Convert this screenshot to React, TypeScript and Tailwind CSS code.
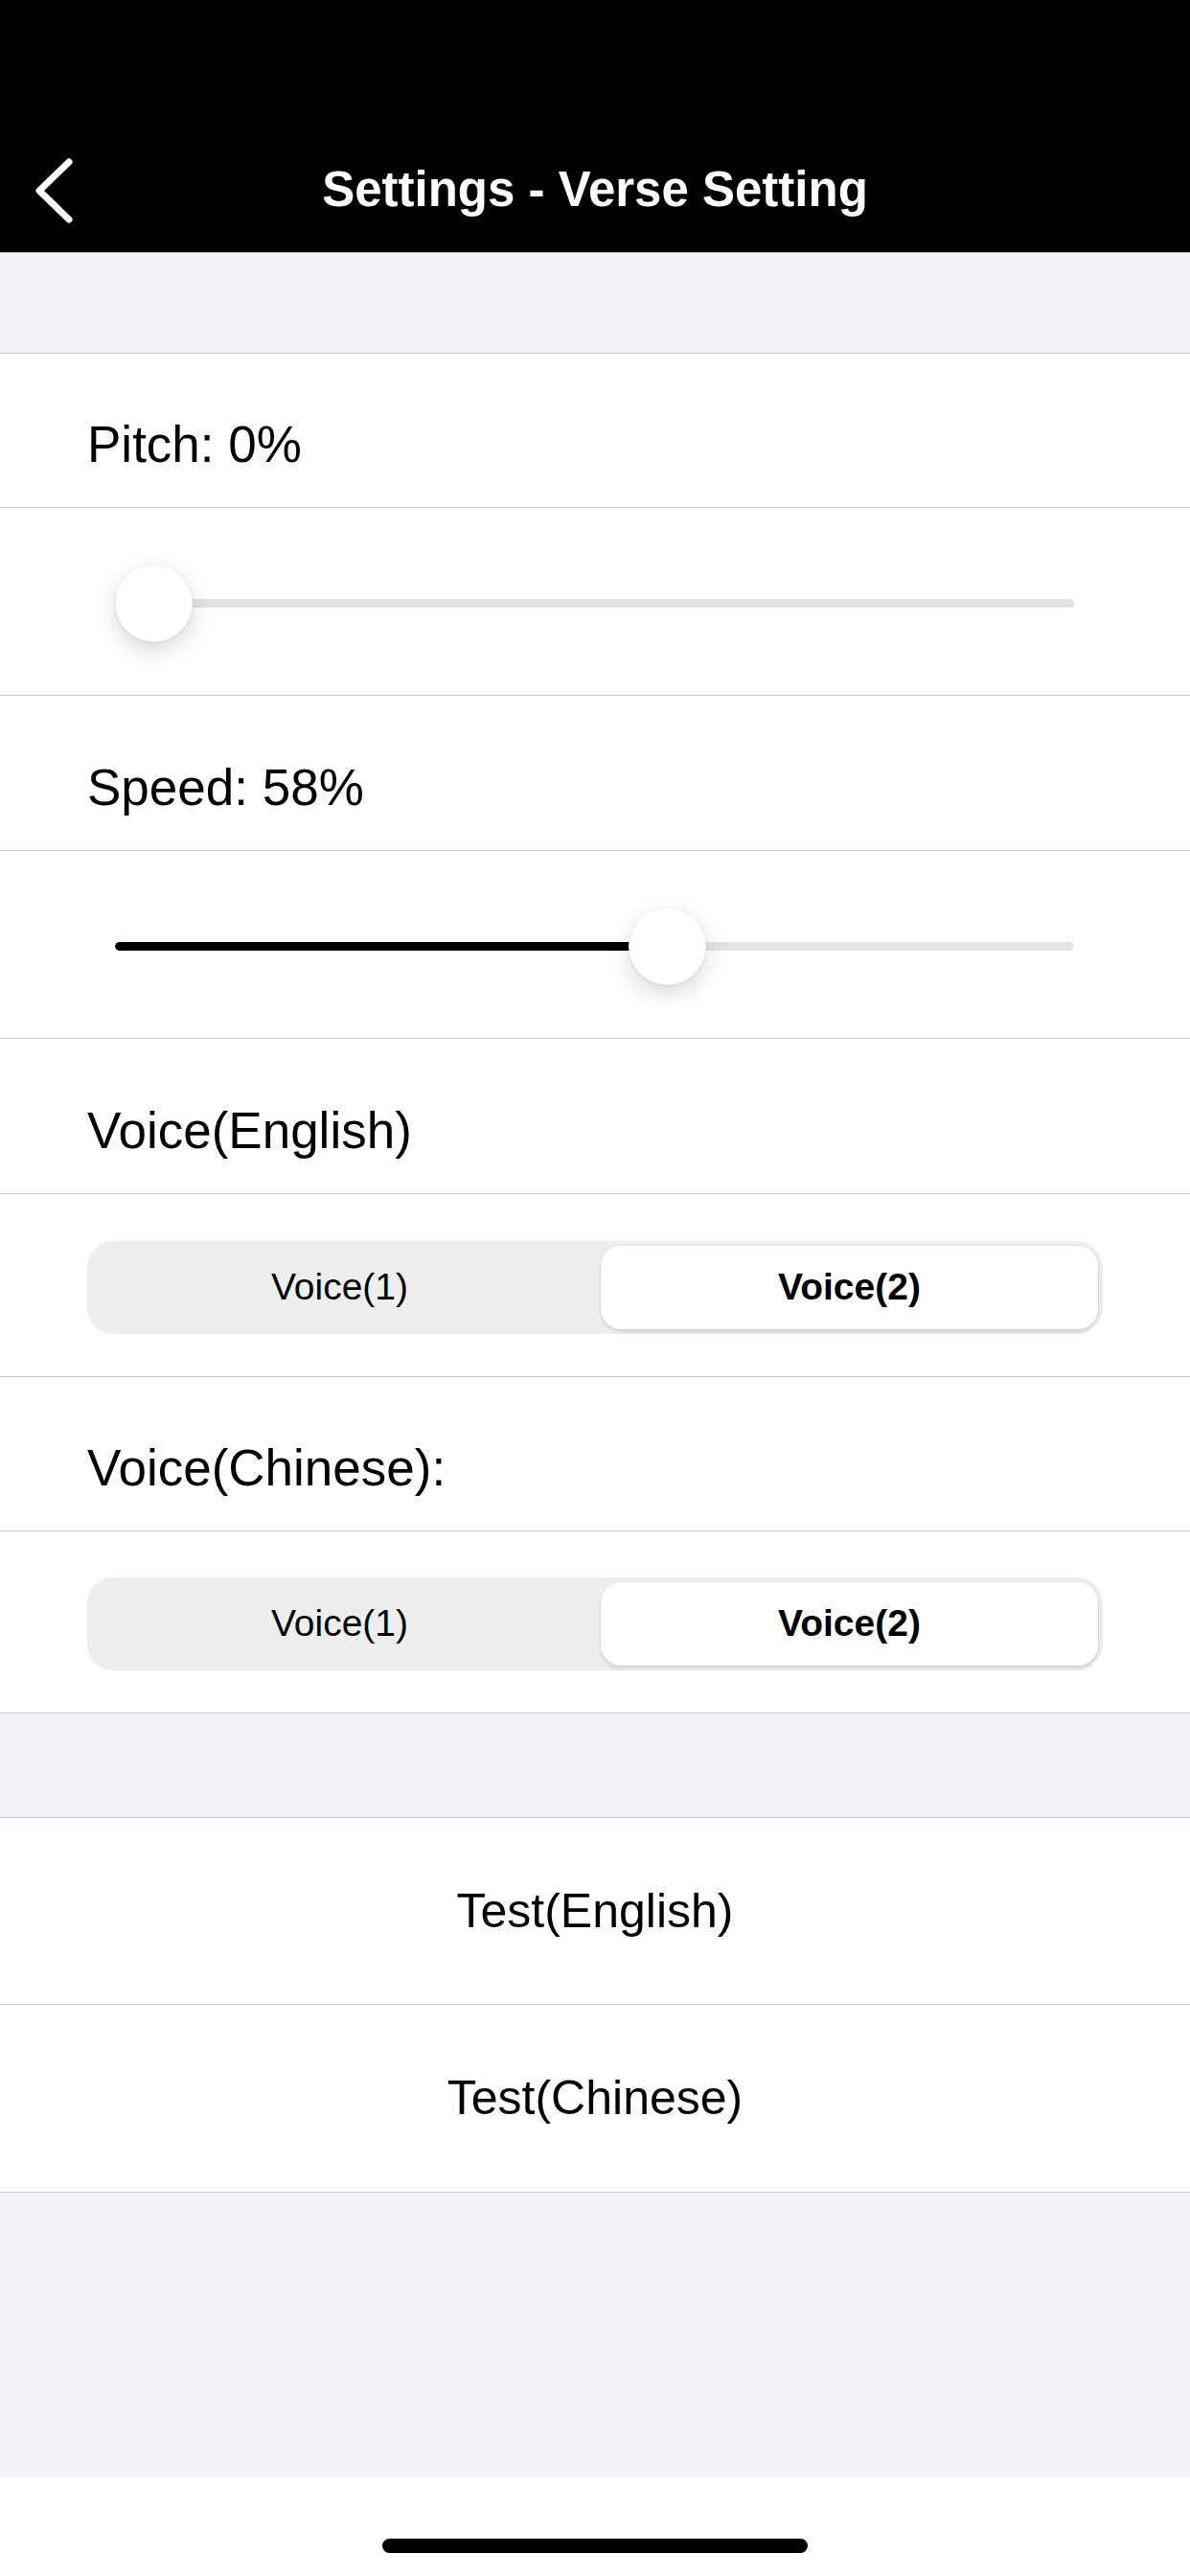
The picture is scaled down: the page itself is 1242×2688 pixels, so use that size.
import React from 'react'

const FONT = { fontFamily: '"Liberation Sans", Arial, sans-serif' }

function Slider({ value }: { value: number }) {
  // thumb is 81px, track runs 120 → 1121
  const thumb = 81
  const width = 1001
  const left = value * (width - thumb)
  return (
    <div className="relative mx-[120px] h-[81px] w-[1001px] flex items-center">
      <div className="h-[9px] w-full rounded-full bg-[#e3e3e6] overflow-hidden">
        <div className="h-full bg-black rounded-full" style={{ width: left + thumb / 2 }} />
      </div>
      <div
        className="absolute top-0 h-[81px] w-[81px] rounded-full bg-white border border-black/[0.04] shadow-[0_9px_24px_rgba(0,0,0,0.15),0_1px_3px_rgba(0,0,0,0.08)]"
        style={{ left }}
      />
    </div>
  )
}

function Segmented({ selected }: { selected: number }) {
  const items = ['Voice(1)', 'Voice(2)']
  return (
    <div className="mx-[91px] h-[97px] rounded-[27px] bg-[#eeeeef] p-[5px] grid grid-cols-[531fr_519fr]">
      {items.map((label, i) => (
        <div
          key={label}
          className={`flex items-center justify-center text-[39px] text-black ${
            selected === i
              ? 'bg-white rounded-[21px] font-bold shadow-[0_3px_4px_rgba(0,0,0,0.10),0_0_0_1px_rgba(0,0,0,0.04)]'
              : 'pr-[14px]'
          }`}
        >
          {label}
        </div>
      ))}
    </div>
  )
}

function LabelRow({ text, h }: { text: string; h: string }) {
  return (
    <div className={`${h} border-b border-[#c8c7cc] bg-white flex items-center pt-[30px] pl-[91px] text-[53px] text-black`}>
      {text}
    </div>
  )
}

export default function App() {
  return (
    <div className="w-[1242px] h-[2688px] flex flex-col bg-[#f2f2f7]" style={FONT}>
      {/* nav bar */}
      <div className="h-[264px] shrink-0 bg-black pt-[132px] border-b border-[#b9b9bd]">
        <div className="h-[131px] grid grid-cols-[1fr_auto_1fr] items-center">
          <div className="pl-[36px] pt-[2px] flex items-center">
            <svg width="42" height="70" viewBox="0 0 42 70" fill="none">
              <path d="M36 5 L5 35 L36 65" stroke="white" strokeWidth="7" strokeLinecap="round" strokeLinejoin="round" />
            </svg>
          </div>
          <div className="text-white text-[51px] font-bold pt-[2px]">Settings - Verse Setting</div>
          <div />
        </div>
      </div>

      <div className="h-[105px] shrink-0 border-b border-[#c8c7cc]" />

      <LabelRow text="Pitch: 0%" h="h-[161px]" />
      <div className="h-[196px] border-b border-[#c8c7cc] bg-white flex items-center pt-[4px]">
        <Slider value={0} />
      </div>

      <LabelRow text="Speed: 58%" h="h-[162px]" />
      <div className="h-[196px] border-b border-[#c8c7cc] bg-white flex items-center pt-[4px]">
        <Slider value={0.583} />
      </div>

      <LabelRow text="Voice(English)" h="h-[162px]" />
      <div className="h-[191px] border-b border-[#c8c7cc] bg-white flex flex-col justify-center pt-[4px]">
        <Segmented selected={1} />
      </div>

      <LabelRow text="Voice(Chinese):" h="h-[161px]" />
      <div className="h-[190px] border-b border-[#c8c7cc] bg-white flex flex-col justify-center pt-[4px]">
        <Segmented selected={1} />
      </div>

      <div className="h-[109px] shrink-0 border-b border-[#c8c7cc]" />

      <div className="h-[195px] border-b border-[#c8c7cc] bg-white flex items-center justify-center text-[50px] text-black">
        Test(English)
      </div>
      <div className="h-[196px] border-b border-[#c8c7cc] bg-white flex items-center justify-center text-[50px] text-black">
        Test(Chinese)
      </div>

      <div className="flex-1" />

      {/* home indicator */}
      <div className="h-[102px] shrink-0 bg-white flex justify-center pt-[63px]">
        <div className="h-[15px] w-[444px] rounded-full bg-black" />
      </div>
    </div>
  )
}
